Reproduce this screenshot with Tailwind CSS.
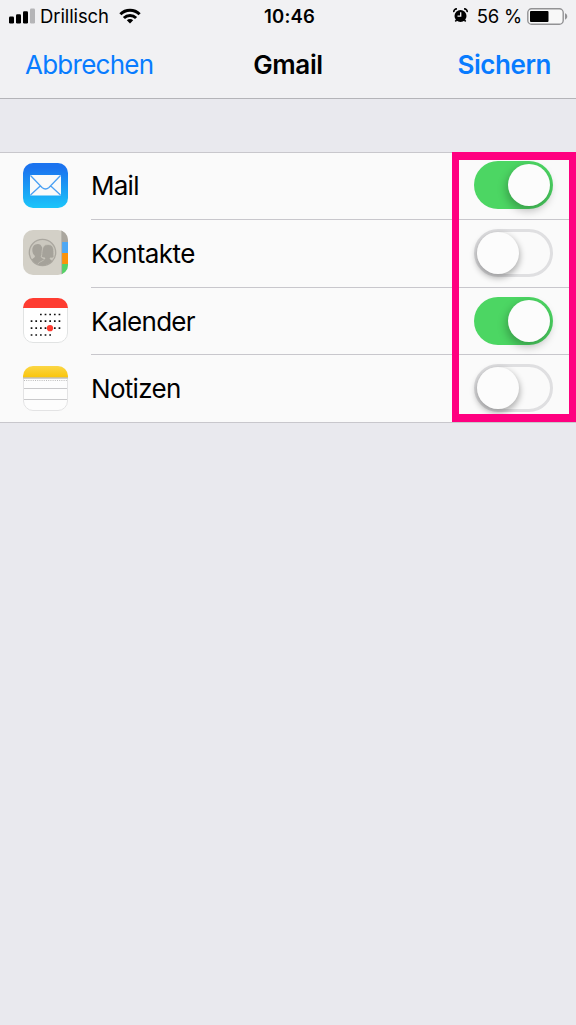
<!DOCTYPE html>
<html lang="de">
<head>
<meta charset="utf-8">
<title>Gmail</title>
<script src="https://cdn.jsdelivr.net/npm/@tailwindcss/browser@4"></script>
</head>
<body class="bg-[#e9e9ee] font-['Inter','Liberation_Sans',sans-serif] text-black">
<div class="relative h-[1025px] w-[576px] overflow-hidden">
  <header class="h-[99px] border-b border-[#b4b4b8] bg-[#f1f1f3]">
    <div class="grid h-8 grid-cols-[1fr_auto_1fr] items-center whitespace-nowrap text-[18.5px]">
      <div class="flex items-center pl-[9px]">
        <svg class="mr-[5px] mb-px" width="26" height="16" viewBox="0 0 26 16"><rect x="0" y="8.5" width="5" height="7" rx="1.2"/><rect x="7" y="6.2" width="5" height="9.3" rx="1.2"/><rect x="14" y="3.3" width="5" height="12.2" rx="1.2"/><rect x="21" y="0.5" width="5" height="15" rx="1.2" fill="#b5b5b7"/></svg>
        <span class="pt-px tracking-[-0.1px]">Drillisch</span>
        <svg class="mb-px ml-[10px]" width="22" height="16" viewBox="0 0 22 16" fill="none" stroke="#000" stroke-width="3"><path d="M1.4 6.2a13.5 13.5 0 0 1 19.2 0"/><path d="M4.9 10a8.7 8.7 0 0 1 12.2 0"/><path d="M11 15.5l-3.2-3.2a4.5 4.5 0 0 1 6.4 0z" fill="#000" stroke="none"/></svg>
      </div>
      <span class="pt-px pl-[3px] font-semibold tracking-[0.2px]">10:46</span>
      <div class="flex items-center justify-end pr-[8px]">
        <svg class="mr-[9px] mb-px" width="15" height="15" viewBox="0 0 16 16"><circle cx="8" cy="8.5" r="6.4"/><path d="M.9 4.5A3 3 0 0 1 4.2 1M11.8 1a3 3 0 0 1 3.3 3.5M3.7 12.8l-1.2 1.5M12.3 12.8l1.2 1.5" fill="none" stroke="#000" stroke-width="1.7"/><path d="M8.2 4.5v4.2H4.8" fill="none" stroke="#f1f1f3" stroke-width="1.4"/></svg>
        <span class="pt-px tracking-[-0.2px]">56 %</span>
        <svg class="ml-[5px]" width="41" height="17" viewBox="0 0 41 17"><rect x=".8" y=".8" width="35.4" height="15.4" rx="3.8" fill="#f8f8f8" stroke="#929294" stroke-width="1.4"/><rect x="3" y="3" width="18.5" height="11" rx="1"/><path d="M38 5.3c3 1.2 3 5.2 0 6.4z" fill="#929294"/></svg>
      </div>
    </div>
    <nav class="grid h-16 grid-cols-[1fr_auto_1fr] items-center px-[25px] text-[26px]">
      <span class="tracking-[-0.75px] text-[#087cff]">Abbrechen</span>
      <span class="font-semibold tracking-[-0.4px]">Gmail</span>
      <span class="text-right font-semibold tracking-[-0.45px] text-[#087cff]">Sichern</span>
    </nav>
  </header>

  <main class="mt-[53px] h-[271px] border-y border-[#c8c7cc] bg-[#fafafa] text-[26px]">
    <div class="flex h-[67px] pl-[23px]">
      <svg class="mt-[10px] shrink-0" width="45" height="45" viewBox="0 0 45 45"><defs><linearGradient id="mail" x2="0" y2="1"><stop offset=".1" stop-color="#1b73ef"/><stop offset="1" stop-color="#1bc5fa"/></linearGradient></defs><rect width="45" height="45" rx="10" fill="url(#mail)"/><rect x="7" y="12" width="31" height="20.5" rx="1" fill="#fafafa"/><path d="M7.5 12.5L19 24.5q3.5 3 7 0L37.5 12.5M7.5 32l10-9.2M37.5 32l-10-9.2" fill="none" stroke="#4ba0f3" stroke-width="1.3"/></svg>
      <div class="ml-[23px] flex flex-1 items-center border-b border-[#c8c7cc] pr-[23px] pb-px"><span class="flex-1 tracking-[-0.75px]">Mail</span>
        <div class="mb-px flex h-12 w-[79px] items-center justify-end rounded-full bg-[#4cd663] pr-[3px]"><div class="size-[42px] rounded-full bg-[#fcfcfc] shadow-[-1px_4px_8px_1px_rgba(0,0,0,0.25)]"></div></div></div>
    </div>
    <div class="flex h-[68px] pl-[23px]">
      <svg class="mt-[10px] shrink-0" width="45" height="45" viewBox="0 0 45 45"><defs><clipPath id="book"><rect width="45" height="45" rx="10"/></clipPath><clipPath id="face"><circle cx="19.5" cy="22.5" r="12.8"/></clipPath></defs><g clip-path="url(#book)"><path fill="#d3d0c7" d="M0 0h45v45H0z"/><path fill="#aaa69e" d="M39 0h6v12h-6z"/><path fill="#4da8f5" d="M39 12h6v11h-6z"/><path fill="#fb9209" d="M39 23h6v11h-6z"/><path fill="#53d366" d="M39 34h6v11h-6z"/><path d="M38.7 0v45" stroke="#aaa79f" stroke-width=".8"/></g><circle cx="19.5" cy="22.5" r="13.2" fill="#cbc8bf" stroke="#aaa79f" stroke-width="1.3"/><g clip-path="url(#face)" fill="#a5a29a"><path d="M5 33c1-4 7-4 7-7-4-3-4-12 3-12 5 0 6 9 3 12 0 2 3 3 5 4v7H5z"/><path d="M14 37c0-6 7-5 8-9-3-.3-4-1-4-1 2-2-1-12.5 7-12.5s5 9.500 6 12.500c-1 1-2 1-4 1 0 3 6 2 7 6v5z" stroke="#cbc8bf" stroke-width=".7"/></g></svg>
      <div class="ml-[23px] flex flex-1 items-center border-b border-[#c8c7cc] pr-[23px]"><span class="flex-1 tracking-[-0.55px]">Kontakte</span>
        <div class="mb-[2px] flex h-12 w-[79px] items-center rounded-full border-3 border-[#dfdfe1]"><div class="size-[42px] rounded-full bg-[#fcfcfc] shadow-[0_3px_6px_1px_rgba(0,0,0,0.3)]"></div></div></div>
    </div>
    <div class="flex h-[67px] pl-[23px]">
      <svg class="mt-[10px] shrink-0" width="45" height="45" viewBox="0 0 45 45"><defs><clipPath id="cal"><rect width="45" height="45" rx="10"/></clipPath></defs><g clip-path="url(#cal)"><path fill="#fff" d="M0 0h45v45H0z"/><path fill="#fe3c31" d="M0 0h45v10H0z"/></g><path d="M.5 10v25a9.5 9.5 0 0 0 9.5 9.500h25a9.500 9.500 0 0 0 9.500-9.500V10" fill="none" stroke="#e1e3e3"/><g stroke="#111" stroke-width="1.7" stroke-dasharray="1.7 2.95"><path d="M17 16.5h21M7.700 23.200h31M7.700 30.200h31M7.700 37h21"/></g><circle cx="27" cy="30.2" r="3.1" fill="#fe3c31"/></svg>
      <div class="ml-[23px] flex flex-1 items-center border-b border-[#c8c7cc] pr-[23px]"><span class="flex-1 tracking-[-0.75px]">Kalender</span>
        <div class="mb-px flex h-12 w-[79px] items-center justify-end rounded-full bg-[#4cd663] pr-[3px]"><div class="size-[42px] rounded-full bg-[#fcfcfc] shadow-[-1px_4px_8px_1px_rgba(0,0,0,0.25)]"></div></div></div>
    </div>
    <div class="flex h-[67px] pl-[23px]">
      <svg class="mt-[10.500px] shrink-0" width="45" height="45" viewBox="0 0 45 45"><defs><linearGradient id="note" x2="0" y2="1"><stop stop-color="#fbd646"/><stop offset="1" stop-color="#fac50a"/></linearGradient><clipPath id="pad"><rect width="45" height="45" rx="10"/></clipPath></defs><g clip-path="url(#pad)"><path fill="#fdfdfd" d="M0 0h45v45H0z"/><path fill="url(#note)" d="M0 0h45v11.5H0z"/><path d="M0 12h45" stroke="#a5a095"/><path d="M1 14.5h44" stroke="#bcbcbc" stroke-dasharray="1 1.2"/><path d="M0 22.5h45M0 33.5h45" stroke="#c9c9cb"/></g><path d="M.5 13v22a9.500 9.500 0 0 0 9.500 9.500h25a9.500 9.500 0 0 0 9.500-9.500V13" fill="none" stroke="#e3e3e4"/></svg>
      <div class="ml-[23px] flex flex-1 items-center pr-[23px]"><span class="flex-1 tracking-[-0.7px]">Notizen</span>
        <div class="mb-[2px] flex h-12 w-[79px] items-center rounded-full border-3 border-[#dfdfe1]"><div class="size-[42px] rounded-full bg-[#fcfcfc] shadow-[0_3px_6px_1px_rgba(0,0,0,0.3)]"></div></div></div>
    </div>
  </main>
  <div class="absolute left-[452px] top-[152px] h-[270px] w-[124px] border-x-[7px] border-y-8 border-[#ff0080]"></div>
</div>
</body>
</html>
